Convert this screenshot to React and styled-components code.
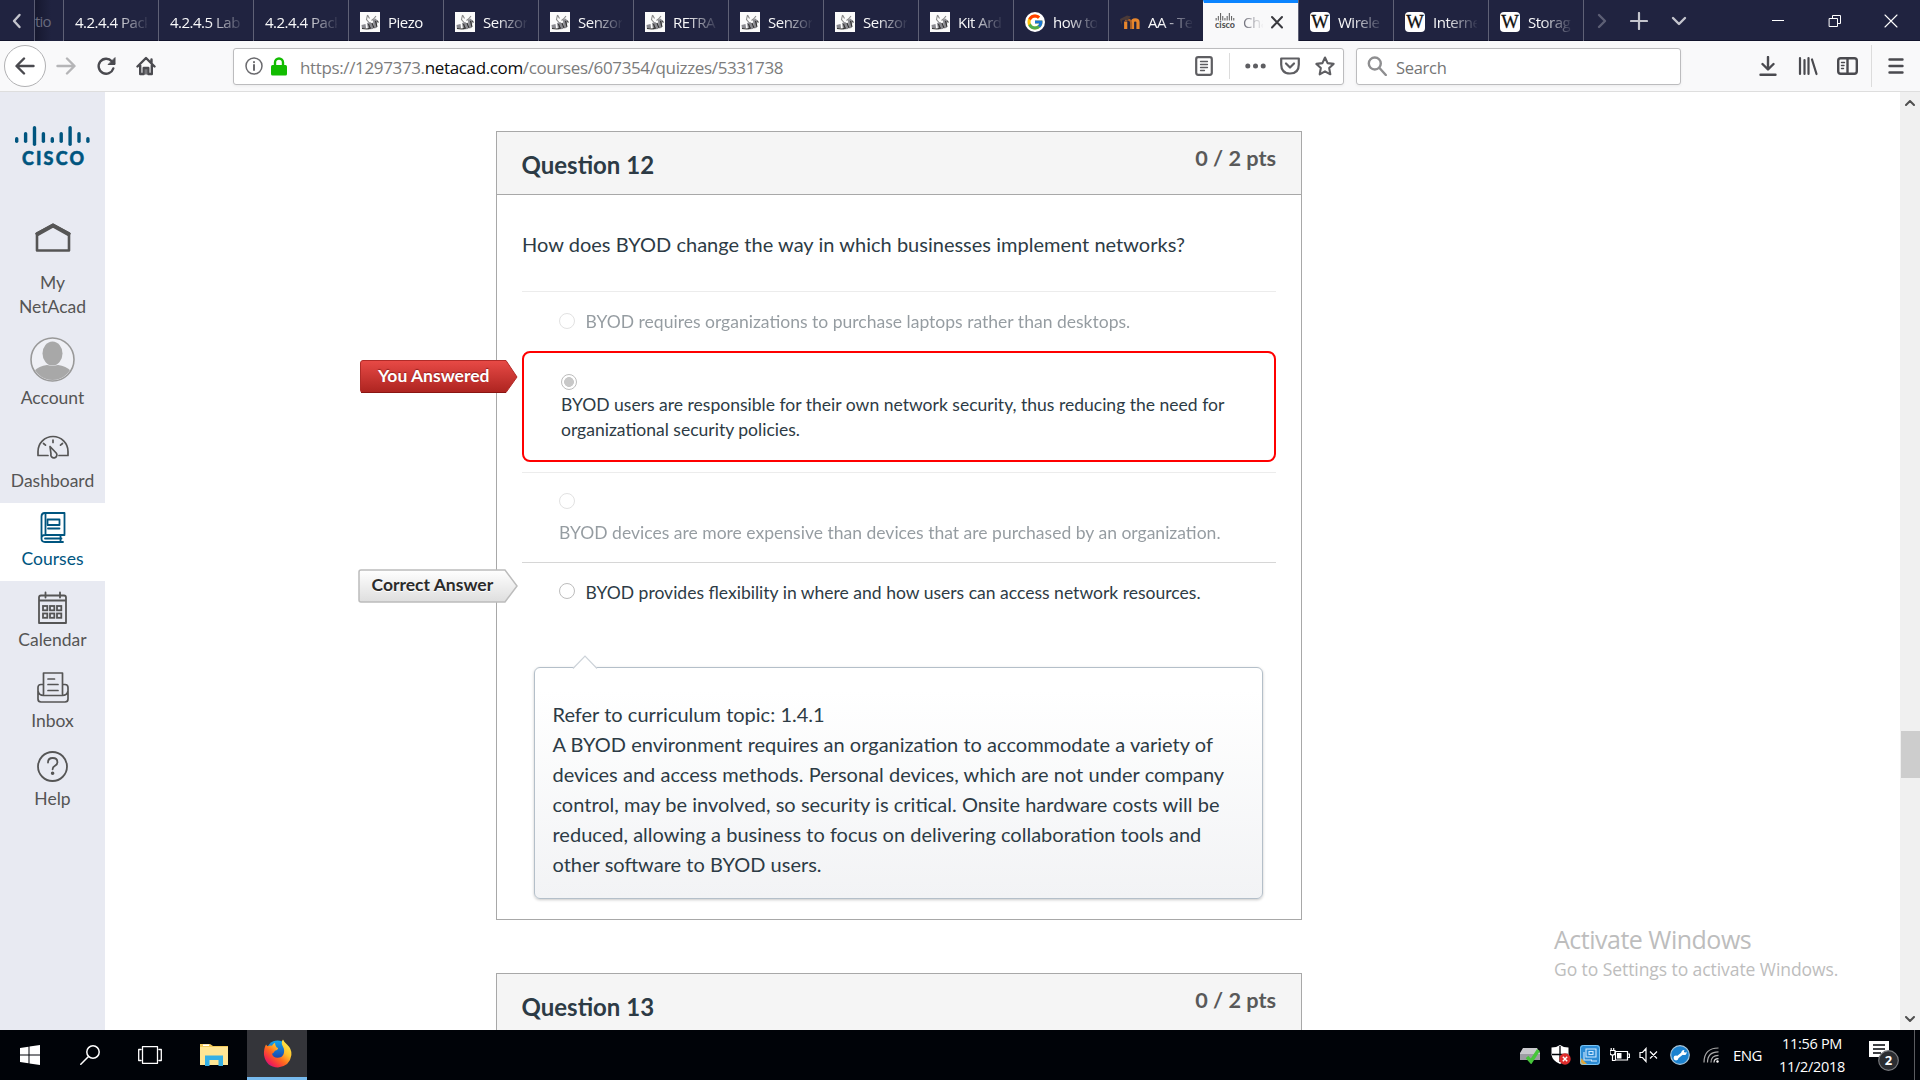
import React from "react";
import styled, { createGlobalStyle, css } from "styled-components";
import { FcGoogle } from "react-icons/fc";

const ui = `"Open Sans", "Noto Sans", sans-serif`;

const GlobalStyle = createGlobalStyle`
  html, body { margin: 0; padding: 0; overflow: hidden; background: #fff; }
  * { box-sizing: border-box; }
  svg { display: block; flex: none; }
`;

const Screen = styled.div`
  width: 1920px;
  height: 1080px;
  display: flex;
  flex-direction: column;
  overflow: hidden;
  font-family: Lato, sans-serif;
`;

/* ---------- tab strip ---------- */
const TabStrip = styled.div`
  height: 41px;
  display: flex;
  background: #202340;
  box-shadow: inset 0 -1px 0 #12142c;
  font-family: ${ui};
  font-size: 15px;
  color: #f9f9fa;
  flex: none;
`;
const ScrollLeft = styled.div`
  width: 35px;
  display: flex;
  align-items: center;
  justify-content: center;
  padding: 0 16px;
  border-right: 1px solid #5a5c72;
`;
const CutTab = styled.div`
  width: 28px;
  line-height: 43px;
  color: #686a7e;
  background: linear-gradient(90deg, #16182f, #202340 16px);
  overflow: hidden;
  letter-spacing: -0.8px;
  white-space: nowrap;
`;
const Tab = styled.div`
  width: 95px;
  height: ${(p) => (p.$active ? 42 : 41)}px;
  display: flex;
  align-items: center;
  gap: 8px;
  padding: 2px 11px 0 11px;
  border-left: 1px solid ${(p) => (p.$active ? "#f9f9fa" : "#5f6176")};
  flex: none;
  ${(p) =>
    p.$active &&
    css`
      background: #f9f9fa;
      color: #6d6d78;
      border-top: 3px solid #0a84ff;
      padding: 0 15px 1px 11px;
    `}
`;
const TabLabel = styled.span`
  flex: 1;
  min-width: 0;
  overflow: hidden;
  white-space: nowrap;
  letter-spacing: -0.5px;
  line-height: 24px;
  mask-image: linear-gradient(90deg, #000 ${(p) => p.$from || 30}%, transparent 104%);
`;
const StripButtons = styled.div`
  flex: 1;
  display: flex;
  align-items: center;
  border-left: 1px solid #5f6176;
`;
const StripButton = styled.div`
  width: ${(p) => p.$w}px;
  height: 41px;
  display: flex;
  align-items: center;
  justify-content: center;
`;
const WikiBadge = styled.span`
  width: 20px;
  height: 20px;
  border-radius: 4px;
  background: #fff;
  color: #111;
  font: 18.5px/20px "Liberation Serif", serif;
  -webkit-text-stroke: 0.3px #111;
  display: flex;
  justify-content: center;
  flex: none;
`;
const GoogleBadge = styled.span`
  width: 20px;
  height: 20px;
  border-radius: 50%;
  background: #fff;
  display: flex;
  align-items: center;
  justify-content: center;
  flex: none;
`;

const Sketch = () => (
  <svg width="20" height="20" viewBox="0 0 20 20">
    <rect width="20" height="20" fill="#fbfbfb" />
    <path d="M7.500 3l2 3.500M7.500 3l-1 4.500 2.500 3M16 4l-2.500 3-2 1.500" fill="none" stroke="#888" strokeWidth="1.100" />
    <path d="M1.500 13l4-1 .5 4-4 1zM7 11l3-1 3 2v5l-5 .5zM13 8l3-1.500 1.500 3.500-1 6-3 .5z" fill="#8a8a90" />
    <path d="M2 16.500l5 .5 4-1M8.500 12l1.500 4M12 11l2 5M15.500 9l1.500 6M17 8.500l1.500 2" fill="none" stroke="#333" strokeWidth="1.100" />
  </svg>
);
const Moodle = () => (
  <svg width="20" height="20" viewBox="0 0 20 20">
    <path d="M5.700 17V9.500M12.500 17V10q0-2.200 2.700-2.200T18 10v7" fill="none" stroke="#e8862c" strokeWidth="3.200" />
    <path d="M5 8.500q2.500-1.500 4.500-.5 1.600.8 1.600 3V17" fill="none" stroke="#a8602a" strokeWidth="2" />
    <path d="M0 7l7-3.500 4 1-3.500 4q-3-1.500-5.500 0L1.500 13z" fill="#4a3a38" />
  </svg>
);
const bars = [2.5, 4.5, 7.5, 4.5, 2.5, 4.5, 7.5, 4.5, 2.5];
const CiscoFavicon = () => (
  <svg width="20" height="20" viewBox="0 0 20 20">
    {bars.map((h, i) => (
      <rect key={i} x={0.6 + i * 2.2} y={8.5 - h} width="1.1" height={h} fill="#666" />
    ))}
    <text x="0" y="15.500" fontFamily="Lato" fontWeight="900" fontSize="9" textLength="20" lengthAdjust="spacingAndGlyphs" fill="#555">cisco</text>
  </svg>
);

const tabIcons = {
  sketch: <Sketch />,
  google: (
    <GoogleBadge>
      <FcGoogle size={18} />
    </GoogleBadge>
  ),
  moodle: <Moodle />,
  cisco: <CiscoFavicon />,
  wiki: <WikiBadge>W</WikiBadge>,
};

const tabs = [
  { label: "4.2.4.4 Pack", from: 55 },
  { label: "4.2.4.5 Lab", from: 55 },
  { label: "4.2.4.4 Pack", from: 55 },
  { icon: "sketch", label: "Piezo", from: 92 },
  { icon: "sketch", label: "Senzor" },
  { icon: "sketch", label: "Senzor" },
  { icon: "sketch", label: "RETRA" },
  { icon: "sketch", label: "Senzor" },
  { icon: "sketch", label: "Senzor" },
  { icon: "sketch", label: "Kit Ard" },
  { icon: "google", label: "how to" },
  { icon: "moodle", label: "AA - Te" },
  { icon: "cisco", label: "Cha", active: true, from: 1 },
  { icon: "wiki", label: "Wirele" },
  { icon: "wiki", label: "Interne" },
  { icon: "wiki", label: "Storag" },
];

/* ---------- navigation toolbar ---------- */
const Toolbar = styled.div`
  height: 51px;
  display: flex;
  align-items: center;
  background: #f9f9fa;
  border-bottom: 1px solid #dedede;
  font-family: ${ui};
  padding: 0 14px 0 4px;
  flex: none;
`;
const BackButton = styled.div`
  width: 42px;
  height: 42px;
  border-radius: 50%;
  border: 1px solid #b1b1b3;
  background: #fff;
  display: flex;
  align-items: center;
  justify-content: center;
`;
const NavIcons = styled.div`
  display: flex;
  gap: 20px;
  margin-left: 10px;
  width: 177px;
`;
const Field = styled.div`
  width: ${(p) => p.$w}px;
  height: 37px;
  margin-right: ${(p) => p.$mr || 0}px;
  border: 1px solid #bcbcbe;
  border-radius: 3px;
  background: #fff;
  box-shadow: 0 1px 3px rgba(0, 0, 0, 0.06);
  display: flex;
  align-items: center;
  padding: 0 8px 0 ${(p) => p.$pl}px;
`;
const Url = styled.div`
  flex: 1;
  margin-left: 13px;
  font-size: 17px;
  letter-spacing: -0.36px;
  color: #7c7c7c;
  white-space: nowrap;
  padding-top: 2px;
  b {
    font-weight: 400;
    color: #0c0c0d;
  }
`;
const Placeholder = styled.div`
  margin-left: 9px;
  font-size: 16.5px;
  letter-spacing: -0.3px;
  color: #757575;
  padding-top: 2px;
`;
const Rule = styled.div`
  width: 1px;
  height: ${(p) => p.$h}px;
  background: #dcdcdc;
  margin: 0 ${(p) => p.$r}px 0 ${(p) => p.$l}px;
`;
const Gap = styled.div`
  width: ${(p) => p.$w}px;
  flex: none;
`;

const Stroke = ({ w = 20, h = 20, c = "#4a4a4f", sw = 2.4, vb, children, fill = "none" }) => (
  <svg width={w} height={h} viewBox={vb || `0 0 ${w} ${h}`} fill={fill} stroke={c} strokeWidth={sw} strokeLinecap="round" strokeLinejoin="round">
    {children}
  </svg>
);

/* ---------- page ---------- */
const Page = styled.div`
  height: 938px;
  display: flex;
  flex: none;
  overflow: hidden;
`;
const Sidebar = styled.nav`
  width: 105px;
  background: #e8eaf2;
  display: flex;
  flex-direction: column;
  padding-top: 34px;
  flex: none;
`;
const Logo = styled.div`
  height: 40px;
  display: flex;
  justify-content: center;
  padding-right: 1px;
`;
const NavItem = styled.a`
  display: flex;
  flex-direction: column;
  align-items: center;
  padding: ${(p) => p.$pt}px 0 ${(p) => p.$pb || 0}px;
  gap: ${(p) => p.$gap}px;
  font-size: 17.5px;
  line-height: 24px;
  text-align: center;
  color: ${(p) => (p.$active ? "#00557f" : "#555")};
  background: ${(p) => (p.$active ? "#fff" : "transparent")};
`;
const Main = styled.main`
  width: 1795px;
  padding: 39px 0 0 391px;
  display: flex;
  flex-direction: column;
  gap: 53px;
`;
const Scrollbar = styled.div`
  width: 20px;
  background: #f0f0f0;
  display: flex;
  flex-direction: column;
  align-items: center;
  padding: 8px 0;
`;
const Thumb = styled.div`
  width: 19px;
  height: 47px;
  background: #cdcdcd;
  margin: 625px 0 auto;
`;

const Card = styled.section`
  width: 806px;
  border: 1px solid #a8a8a8;
  color: #2d3b45;
  flex: none;
`;
const CardHeader = styled.header`
  height: 63px;
  padding: 0 25px 0 24.5px;
  display: flex;
  align-items: center;
  justify-content: space-between;
  background: #f5f5f5;
  border-bottom: 1px solid #a8a8a8;
  font-weight: 700;
`;
const Title = styled.span`
  font-size: 24px;
  line-height: 29px;
  padding-top: 2px;
`;
const Points = styled.span`
  font-size: 21.7px;
  line-height: 26px;
  color: #595959;
  padding-bottom: 10px;
`;
const Body = styled.div`
  padding: 34px 25px 20px;
  display: flex;
  flex-direction: column;
`;
const Prompt = styled.div`
  font-size: 20px;
  line-height: 30px;
  word-spacing: 0.15px;
  margin-bottom: 32px;
  white-space: nowrap;
`;
const Answer = styled.div`
  position: relative;
  height: ${(p) => p.$h}px;
  border-top: 1px solid ${(p) => (p.$dark ? "#d6d6d6" : "#ececec")};
  padding-left: 37px;
  display: flex;
  font-size: 17.54px;
  line-height: 25px;
  white-space: nowrap;
  ${(p) =>
    p.$stacked
      ? css`
          flex-direction: column;
          padding-top: 20px;
          gap: ${p.$gap}px;
        `
      : css`
          align-items: center;
          gap: 10.5px;
        `}
  ${(p) =>
    p.$chosen &&
    css`
      border: 2px solid #f00;
      border-radius: 8px;
      margin-bottom: 10px;
      padding-top: 21px;
    `}
`;
const AnswerText = styled.span`
  opacity: ${(p) => (p.$muted ? 0.5 : 1)};
`;
const Radio = styled.span`
  width: 16px;
  height: 16px;
  border-radius: 50%;
  border: 1px solid ${(p) => (p.$muted ? "#e2e2e2" : "#bdbdbd")};
  background: ${(p) => (p.$checked ? "radial-gradient(circle, #c8c8c8 4.600px, #fff 5.200px)" : "#fff")};
  margin-bottom: ${(p) => p.$mb || 0}px;
  flex: none;
`;
const Ribbon = styled.div`
  position: absolute;
  left: ${(p) => p.$x}px;
  top: ${(p) => p.$y}px;
  width: 160px;
  height: 34px;
  font-size: 17.5px;
  font-weight: 700;
  svg {
    position: absolute;
    inset: 0;
  }
  span {
    position: relative;
    display: block;
    line-height: 32px;
    padding-left: ${(p) => p.$pl}px;
    color: ${(p) => (p.$red ? "#fff" : "#2b2b2b")};
    text-shadow: ${(p) => (p.$red ? "0 -1px 1px rgba(80,0,0,.5)" : "0 1px 0 #fff")};
  }
`;
const Comment = styled.div`
  position: relative;
  height: 232px;
  margin: 45px 13px 0 12px;
  padding: 31px 17.5px 0;
  border: 1px solid #b4bfc9;
  border-radius: 6px;
  background: linear-gradient(#fff 10%, #f2f3f5);
  box-shadow: 0 1px 3px rgba(0, 0, 0, 0.22);
  font-size: 20px;
  line-height: 30px;
  word-spacing: 0.1px;
  white-space: nowrap;
  & > svg {
    position: absolute;
    left: 37px;
    top: -13px;
  }
`;

/* ---------- watermark & taskbar ---------- */
const Watermark = styled.div`
  position: absolute;
  left: 1554px;
  top: 921px;
  font-family: ${ui};
  color: #bdbdbd;
  white-space: nowrap;
`;
const WmTitle = styled.div`
  font-size: 25px;
  line-height: 36px;
  letter-spacing: -0.5px;
`;
const WmText = styled.div`
  font-size: 17.5px;
  line-height: 25px;
  letter-spacing: -0.07px;
`;
const Taskbar = styled.div`
  height: 50px;
  background: #000308;
  display: flex;
  align-items: center;
  color: #fff;
  font-family: ${ui};
  flex: none;
`;
const TaskButton = styled.div`
  width: ${(p) => p.$w}px;
  height: 50px;
  display: flex;
  align-items: center;
  justify-content: center;
  ${(p) =>
    p.$active &&
    css`
      background: #34353a;
      border-bottom: 3px solid #76b9ed;
    `}
`;
const Tray = styled.div`
  margin-left: auto;
  display: flex;
  align-items: center;
  height: 50px;
`;
const Lang = styled.span`
  width: 30px;
  margin: 0 15px 0 14px;
  font-size: 15px;
  letter-spacing: -0.6px;
`;
const Clock = styled.div`
  width: 68px;
  text-align: center;
  font-size: 14.5px;
  line-height: 23px;
  letter-spacing: -0.3px;
  white-space: nowrap;
  display: flex;
  flex-direction: column;
  align-items: center;
`;
const ShowDesktop = styled.div`
  width: 6px;
  height: 50px;
  border-left: 1px solid #5a5c60;
`;

const CiscoLogo = () => (
  <svg width="76" height="40" viewBox="0 0 76 40">
    {[6, 11, 20, 11, 6, 11, 20, 11, 6].map((h, i) => {
      const y = h === 20 ? 0 : h === 11 ? 6 : 11;
      return <rect key={i} x={1 + i * 8.9} y={y} width="3.4" height={h} rx="1.7" fill="#00557f" />;
    })}
    <text x="8" y="38.800" fontFamily="Lato" fontWeight="900" fontSize="18" textLength="62" fill="#00557f" stroke="#00557f" strokeWidth=".5">CISCO</text>
  </svg>
);

const g = "#555";
const HomeIcon = () => (
  <svg width="36" height="30" viewBox="0 0 36 30">
    <path d="M2 28.500V11.500L18 3l16 8.500v17z" fill="none" stroke={g} strokeWidth="2.600" strokeLinejoin="round" />
    <path d="M1 13L18 3.500 35 13" fill="none" stroke={g} strokeWidth="4" />
  </svg>
);
const Avatar = () => (
  <svg width="45" height="45" viewBox="0 0 45 45">
    <defs>
      <clipPath id="av"><circle cx="22.500" cy="22.500" r="20.500" /></clipPath>
    </defs>
    <circle cx="22.500" cy="22.500" r="21.500" fill="#eff0f5" stroke="#999" strokeWidth="1.600" />
    <g clipPath="url(#av)" fill="#a8a8a8">
      <ellipse cx="22.500" cy="16.500" rx="10" ry="12" />
      <path d="M4 34q5-5 13-6l5.500 1 5.500-1q8 1 13 6v12H4z" />
    </g>
  </svg>
);
const DashIcon = () => (
  <Stroke w={32} h={24} c={g} sw={1.700}>
    <path d="M11 20.500H1V16.500a15 15 0 0 1 30 0v4H22M16 5v2.500M6.500 8.500l2 1.700M25.500 8.500l-2 1.700" />
    <path d="M13 11.500l1 7.500a3 3 0 1 0 5.200-1z" />
  </Stroke>
);
const CoursesIcon = () => (
  <Stroke w={26} h={31} c="#00557f" sw={1.800}>
    <path d="M24.500 22.500V1H4.500Q1.500 1 1.500 4.500v22q0 3.500 3.500 3.500h18M24.500 23H5q-3.500 0-3.500 3.500M5.500 1.500V22M5 26.500h16.500M20.500 23v6" />
    <path d="M7.500 7.500h12V13h-12zM8 16.500h11.500" />
  </Stroke>
);
const CalendarIcon = () => (
  <Stroke w={29} h={33} c={g} sw={1.800}>
    <path d="M1 6.500q0-2 2-2h23q2 0 2 2V32H1zM1 9.500h27M7.500 1.500v5M22 1.500v5" />
    {[15, 22.5].map((y) => [5.5, 12.5, 19.5].map((x) => <rect key={x + "-" + y} x={x - 0.5} y={y} width="4.300" height="4.300" strokeLinejoin="miter" />))}
  </Stroke>
);
const InboxIcon = () => (
  <Stroke w={32} h={31} c={g} sw={1.700}>
    <path d="M6.500 12.500H4q-3 0-3 3V27q0 3 3 3h24q3 0 3-3V15.500q0-3-3-3h-2.500M6.500 22V1h19v21M1 19q1 4.500 5.500 4.500h19Q30 23.500 31 19M11 7h6.500M11 12.500h10M11 18.500h10" />
  </Stroke>
);
const HelpIcon = () => (
  <Stroke w={31} h={31} c={g} sw={1.800}>
    <circle cx="15.500" cy="15.500" r="14.500" />
    <path d="M11 11.500q0-4.500 4.700-4.500t4.700 4.200q0 2.300-2.400 3.600t-2.400 3.500" />
    <circle cx="15.600" cy="22.300" r=".9" fill={g} />
  </Stroke>
);

const navItems = [
  { icon: <HomeIcon />, label: <>My<br />NetAcad</>, pt: 56, gap: 19 },
  { icon: <Avatar />, label: "Account", pt: 18, gap: 4 },
  { icon: <DashIcon />, label: "Dashboard", pt: 25, gap: 10, pb: 10 },
  { icon: <CoursesIcon />, label: "Courses", pt: 9, gap: 4, pb: 10, active: true },
  { icon: <CalendarIcon />, label: "Calendar", pt: 10, gap: 4 },
  { icon: <InboxIcon />, label: "Inbox", pt: 20, gap: 6 },
  { icon: <HelpIcon />, label: "Help", pt: 18, gap: 5 },
];

const RedRibbonShape = () => (
  <svg width="160" height="34" viewBox="0 0 160 34">
    <defs>
      <linearGradient id="rr" x1="0" y1="0" x2="0" y2="1">
        <stop offset="0" stopColor="#e84a46" />
        <stop offset="1" stopColor="#ad2420" />
      </linearGradient>
    </defs>
    <path d="M3 .5H146L157 17 146 32.500H3q-2.500 0-2.500-2.500V3Q.5.5 3 .5z" fill="url(#rr)" stroke="#b02b28" />
    <path d="M1 32.500H146" stroke="#8a1512" strokeWidth="1" />
  </svg>
);
const GreyRibbonShape = () => (
  <svg width="160" height="35" viewBox="0 0 160 35">
    <defs>
      <linearGradient id="gr" x1="0" y1="0" x2="0" y2="1">
        <stop offset="0" stopColor="#fff" />
        <stop offset="1" stopColor="#dedede" />
      </linearGradient>
    </defs>
    <path d="M3 1H147L159 17 147 33H3Q1 33 1 31V3Q1 1 3 1z" fill="url(#gr)" stroke="#bcbcbc" strokeWidth="1.500" />
  </svg>
);

const Firefox = () => (
  <svg width="29" height="29" viewBox="0 0 29 29">
    <defs>
      <linearGradient id="ff" x1=".9" y1="0.05" x2=".15" y2=".95">
        <stop offset="0" stopColor="#fff14f" />
        <stop offset=".35" stopColor="#ffc02c" />
        <stop offset=".6" stopColor="#ff6a1e" />
        <stop offset=".85" stopColor="#f4274a" />
        <stop offset="1" stopColor="#c5128c" />
      </linearGradient>
      <linearGradient id="fb" x1="0" y1="0" x2="0" y2="1">
        <stop offset="0" stopColor="#12a5ee" />
        <stop offset="1" stopColor="#1c2e9c" />
      </linearGradient>
    </defs>
    <circle cx="14.500" cy="12.500" r="11" fill="url(#fb)" />
    <path d="M3 5.500Q4 7 5 7.200q2-1 4-.5.500-1.600 3-3 0 3 1.500 4.500 2 .5 1.500 1.500-.5 1.500-3 2-1.500 2.500-3 3 1 4 5.500 4 4.500 0 6-3.500 1.500-4-.5-7.500Q17.500 3.500 20 .5q1 2.500 4 5 5 4.500 4.400 10.500-1.400 11-13.400 12.500Q3 28 1 16 .5 10 3 5.500z" fill="url(#ff)" />
  </svg>
);

export default function App() {
  return (
    <Screen>
      <GlobalStyle />
      <TabStrip>
        <ScrollLeft>
          <Stroke w={10} h={16} c="#c4c5cd" sw={2.4}><path d="M7.500 2L2 8 7.500 14" /></Stroke>
        </ScrollLeft>
        <CutTab>tio</CutTab>
        {tabs.map((t, i) => (
          <Tab key={i} $active={t.active}>
            {t.icon && tabIcons[t.icon]}
            <TabLabel $from={t.from}>{t.label}</TabLabel>
            {t.active && <Stroke w={12} h={14} c="#3a3a3f" sw={2}><path d="M1 2l10 10.500M11 2L1 12.500" /></Stroke>}
          </Tab>
        ))}
        <StripButtons>
          <StripButton $w={35}><Stroke w={10} h={16} c="#5d5f75" sw={2.400}><path d="M2 2l6 6-6 6" /></Stroke></StripButton>
          <StripButton $w={40}><Stroke w={18} h={18} c="#c4c5cd" sw={2.200}><path d="M9 1v16M1 9h16" /></Stroke></StripButton>
          <StripButton $w={40}><Stroke w={16} h={10} c="#c4c5cd" sw={2.400}><path d="M2 2l6 6 6-6" /></Stroke></StripButton>
          <Gap $w={50} />
          <StripButton $w={57}><Stroke w={12} h={12} c="#fff" sw={1}><path d="M0 5.500h12" /></Stroke></StripButton>
          <StripButton $w={57}><Stroke w={13} h={14} c="#fff" sw={1}><path d="M1.500 4.500h8v8h-8zM4.500 4V1.500h8v8H10" /></Stroke></StripButton>
          <StripButton $w={56}><Stroke w={14} h={14} c="#fff" sw={1.100}><path d="M1 1l12 12M13 1L1 13" /></Stroke></StripButton>
        </StripButtons>
      </TabStrip>

      <Toolbar>
        <BackButton><Stroke><path d="M18.500 10H2M9 2.500L1.500 10 9 17.500" /></Stroke></BackButton>
        <NavIcons>
          <Stroke c="#b5b5b7"><path d="M1.500 10H18M11 2.500l7.500 7.500-7.500 7.500" /></Stroke>
          <Stroke><path d="M17.300 12.500a7.500 7.500 0 1 1-1.500-7.200L18 7.500" /><path d="M19 2v6.500H12.500z" fill="#4a4a4f" strokeWidth="1" /></Stroke>
          <Stroke><path d="M1.500 10.500L10 2l8.500 8.500M4.200 9.500V18h3.500v-6h4.600v6h3.500V9.500M15.500 3.500v3" /><path d="M10 13v5" strokeWidth="1.500" /></Stroke>
        </NavIcons>
        <Field $w={1111} $pl={11} $mr={12}>
          <Stroke w={18} h={18} c="#6a6a6e" sw={1.500}><circle cx="9" cy="9" r="8" /><path d="M9 8v5" strokeWidth="2" /><path d="M9 5v.2" strokeWidth="2" /></Stroke>
          <Gap $w={8} />
          <svg width="16" height="19" viewBox="0 0 16 19"><path d="M4 9V5.500a4 4 0 0 1 8 0V9" fill="none" stroke="#12bc00" strokeWidth="2.400" /><rect y="8" width="16" height="10.500" rx="1.500" fill="#12bc00" /></svg>
          <Url>https://1297373.<b>netacad.com</b>/courses/607354/quizzes/5331738</Url>
          <Stroke w={18} h={20} c="#5e5e62" sw={2.200}><rect x="1.200" y="1.200" width="15.600" height="17.600" rx="2" /><path d="M5.500 5.500h7M5.500 8.500h7M5.500 11.500h7M5.500 14.500h4" strokeWidth="1.300" /></Stroke>
          <Rule $h={26} $l={16} $r={15} />
          <svg width="21" height="6" viewBox="0 0 21 6" fill="#5e5e62"><circle cx="2.800" cy="3" r="2.500" /><circle cx="10.500" cy="3" r="2.500" /><circle cx="18.200" cy="3" r="2.500" /></svg>
          <Gap $w={14} />
          <Stroke w={20} h={18} c="#5e5e62" sw={2.200}><path d="M1.200 1.500h17.600v6q0 9-8.800 9t-8.800-9z" /><path d="M6 6.500l4 4 4-4" /></Stroke>
          <Gap $w={15} />
          <Stroke c="#5e5e62" sw={2.100}><path d="M10 1.500l2.600 5.600 6 .8-4.400 4.200 1.100 6.200L10 15.300l-5.300 3 1.100-6.200L1.400 7.900l6-.8z" /></Stroke>
        </Field>
        <Field $w={325} $pl={10}>
          <Stroke c="#8e8e90" sw={2.400}><circle cx="7.800" cy="7.500" r="6" /><path d="M12.500 12l6.300 7" /></Stroke>
          <Placeholder>Search</Placeholder>
        </Field>
        <Gap $w={78} />
        <Stroke w={18}><path d="M9 1v12M3.500 8L9 13.500 14.500 8M1.500 18.800h15" /></Stroke>
        <Gap $w={21} />
        <Stroke sw={2.200}><path d="M2 2v16M6.500 4v14M10.500 2v16M14 3.500L18.500 18" /></Stroke>
        <Gap $w={19} />
        <Stroke w={21} h={18}><rect x="1.200" y="1.200" width="18.600" height="15.600" rx="2.500" /><path d="M10.500 1.500v15" /><path d="M4.500 5.500h3M4.500 8.500h2.500M4.500 11.500h2" strokeWidth="1.400" /></Stroke>
        <Rule $h={42} $l={13} $r={16} />
        <Stroke w={16} h={16}><path d="M1.500 1.500h13M1.500 8h13M1.500 14.500h13" /></Stroke>
      </Toolbar>

      <Page>
        <Sidebar>
          <Logo><CiscoLogo /></Logo>
          {navItems.map((n, i) => (
            <NavItem key={i} $pt={n.pt} $pb={n.pb} $gap={n.gap} $active={n.active}>
              {n.icon}
              <span>{n.label}</span>
            </NavItem>
          ))}
        </Sidebar>
        <Main>
          <Card>
            <CardHeader>
              <Title>Question 12</Title>
              <Points>0 / 2 pts</Points>
            </CardHeader>
            <Body>
              <Prompt>How does BYOD change the way in which businesses implement networks?</Prompt>
              <Answer $h={60}>
                <Radio $muted $mb={1} />
                <AnswerText $muted>BYOD requires organizations to purchase laptops rather than desktops.</AnswerText>
              </Answer>
              <Answer $h={111} $stacked $chosen $gap={2}>
                <Ribbon $x={-164} $y={7} $pl={18} $red>
                  <RedRibbonShape />
                  <span>You Answered</span>
                </Ribbon>
                <Radio $checked />
                <AnswerText>
                  BYOD users are responsible for their own network security, thus reducing the need for
                  <br />
                  organizational security policies.
                </AnswerText>
              </Answer>
              <Answer $h={90} $stacked $gap={11}>
                <Radio $muted />
                <AnswerText $muted>BYOD devices are more expensive than devices that are purchased by an organization.</AnswerText>
              </Answer>
              <Answer $h={60} $dark>
                <Ribbon $x={-164} $y={6} $pl={13.5}>
                  <GreyRibbonShape />
                  <span>Correct Answer</span>
                </Ribbon>
                <Radio $mb={3} />
                <AnswerText>BYOD provides flexibility in where and how users can access network resources.</AnswerText>
              </Answer>
              <Comment>
                <svg width="26" height="14" viewBox="0 0 26 14">
                  <path d="M1 13.500L13 1l12 12.500" fill="#fff" stroke="#cdd3d9" strokeWidth="1.200" />
                </svg>
                Refer to curriculum topic: 1.4.1<br />
                A BYOD environment requires an organization to accommodate a variety of<br />
                devices and access methods. Personal devices, which are not under company<br />
                control, may be involved, so security is critical. Onsite hardware costs will be<br />
                reduced, allowing a business to focus on delivering collaboration tools and<br />
                other software to BYOD users.
              </Comment>
            </Body>
          </Card>
          <Card>
            <CardHeader>
              <Title>Question 13</Title>
              <Points>0 / 2 pts</Points>
            </CardHeader>
          </Card>
        </Main>
        <Scrollbar>
          <Stroke w={10} h={6} c="#505050" sw={2}><path d="M1 5l4-4 4 4" /></Stroke>
          <Thumb />
          <Stroke w={10} h={6} c="#505050" sw={2}><path d="M1 1l4 4 4-4" /></Stroke>
        </Scrollbar>
      </Page>

      <Watermark>
        <WmTitle>Activate Windows</WmTitle>
        <WmText>Go to Settings to activate Windows.</WmText>
      </Watermark>

      <Taskbar>
        <TaskButton $w={60}>
          <svg width="20" height="20" viewBox="0 0 20 20" fill="#fff"><path d="M0 3l8.500-1.200v7.700H0zM9.500 1.600L20 0v9.500H9.500zM0 10.500h8.500v7.700L0 17zM9.500 10.500H20V20L9.500 18.400z" /></svg>
        </TaskButton>
        <TaskButton $w={60}>
          <Stroke c="#fff" sw={1.500}><circle cx="13" cy="7" r="6.200" /><path d="M8.500 11.500L.8 19.200" /></Stroke>
        </TaskButton>
        <TaskButton $w={60}>
          <Stroke w={24} h={18} c="#fff" sw={1.300}><path d="M4.500.7h15v16.600h-15zM3 3.500H.7v11H3M21 3.500h2.300v11H21" /></Stroke>
        </TaskButton>
        <TaskButton $w={67}>
          <svg width="28" height="24" viewBox="0 0 28 24">
            <path d="M0 1h10l3 2h15v19H0z" fill="#f3ca5a" />
            <path d="M0 4h28v18H0z" fill="#ffe694" />
            <path d="M3 1.500h6v1.500H3z" fill="#fff" />
            <path d="M5 23V12.500h18V23h-4.500v-6h-9v6z" fill="#35b0e5" />
          </svg>
        </TaskButton>
        <TaskButton $w={60} $active><Firefox /></TaskButton>
        <Tray>
          <svg width="21" height="18" viewBox="0 0 21 18">
            <path d="M3 2h14l3 5v7H0V7z" fill="#c9c9cd" /><path d="M0 8h20v6H0z" fill="#9c9ca2" />
            <path d="M7 11l4 4.500L18.500 4" fill="none" stroke="#46c63a" strokeWidth="3.500" />
          </svg>
          <Gap $w={10} />
          <svg width="20" height="20" viewBox="0 0 20 20">
            <path d="M9 0q3.500 2.500 8.500 2.500V10q-1 6-8.500 9Q1.500 16 .5 10V2.500Q5.500 2.500 9 0z" fill="#fff" />
            <path d="M9 1v16M1 9.500h16" stroke="#000308" strokeWidth="1.300" />
            <circle cx="14" cy="14" r="5.700" fill="#dd2c2c" /><path d="M11.800 11.800l4.400 4.400M16.200 11.800l-4.400 4.400" stroke="#fff" strokeWidth="1.400" />
          </svg>
          <Gap $w={9} />
          <svg width="20" height="20" viewBox="0 0 20 20">
            <rect width="20" height="20" rx="3" fill="#2b8bd4" /><path d="M0 12l8 8H3q-3 0-3-3z" fill="#e0a63a" />
            <path d="M6 4h10v8H6zM4 7v8h8M9 6.500h4v3H9zM11 16h6" fill="none" stroke="#cfeaff" strokeWidth="1.100" />
            <rect x=".5" y=".5" width="19" height="19" rx="3" fill="none" stroke="#7cc4f2" />
          </svg>
          <Gap $w={10} />
          <svg width="20" height="16" viewBox="0 0 20 16">
            <path d="M5.500 4.500h12v8.500h-12z M17.500 7h2v3.500h-2M0 3.500h5v2.500q0 2-2.500 2T0 6zM1.200 3.500V1M3.700 3.500V1M2.500 8v5.500h3" fill="none" stroke="#fff" strokeWidth="1.200" />
            <path d="M7 6h4.500v5.500H7z" fill="#fff" />
          </svg>
          <Gap $w={9} />
          <svg width="20" height="16" viewBox="0 0 20 16" fill="none" stroke="#fff" strokeWidth="1.200">
            <path d="M1 5.500h2.500L7 1.500v13l-3.500-4H1zM11 4.500l7 7M18 4.500l-7 7" />
          </svg>
          <Gap $w={11} />
          <svg width="20" height="20" viewBox="0 0 20 20">
            <circle cx="10" cy="10" r="9.300" fill="#1b82cf" stroke="#a6c5da" strokeWidth="1.200" />
            <path d="M6 13.500l7.500-6" stroke="#fff" strokeWidth="2.600" /><circle cx="6" cy="13" r="2.400" fill="#fff" /><circle cx="14" cy="7.500" r="2.600" fill="#fff" /><circle cx="15.300" cy="6.200" r="1.300" fill="#1b82cf" />
          </svg>
          <Gap $w={13} />
          <svg width="16" height="16" viewBox="0 0 16 16" fill="none" stroke="#ddd" strokeWidth="1.200">
            <path d="M1 15.500Q1 1 15.500 1M4.500 15.500Q4.500 4.800 15.500 4.800M8 15.500Q8 8.300 15.500 8.300" stroke="#aaa" />
            <path d="M11 15.500q0-3.800 4.500-3.800" /><circle cx="14.500" cy="14.500" r="1.200" fill="#fff" stroke="none" />
          </svg>
          <Lang>ENG</Lang>
          <Clock><span>11:56 PM</span><span>11/2/2018</span></Clock>
          <Gap $w={23} />
          <svg width="31" height="31" viewBox="0 0 31 31">
            <path d="M0 1h20v16h-5l-5 4v-4H0z" fill="#fff" />
            <path d="M4 5h12M4 9h12M4 13h8" stroke="#000308" strokeWidth="1.300" />
            <circle cx="19.500" cy="20.500" r="9.800" fill="#2b2d31" stroke="#77797d" strokeWidth="1.200" />
            <text x="19.500" y="25.200" textAnchor="middle" fontFamily="Open Sans" fontWeight="700" fontSize="13" fill="#fff">2</text>
          </svg>
          <Gap $w={14} />
          <ShowDesktop />
        </Tray>
      </Taskbar>
    </Screen>
  );
}
